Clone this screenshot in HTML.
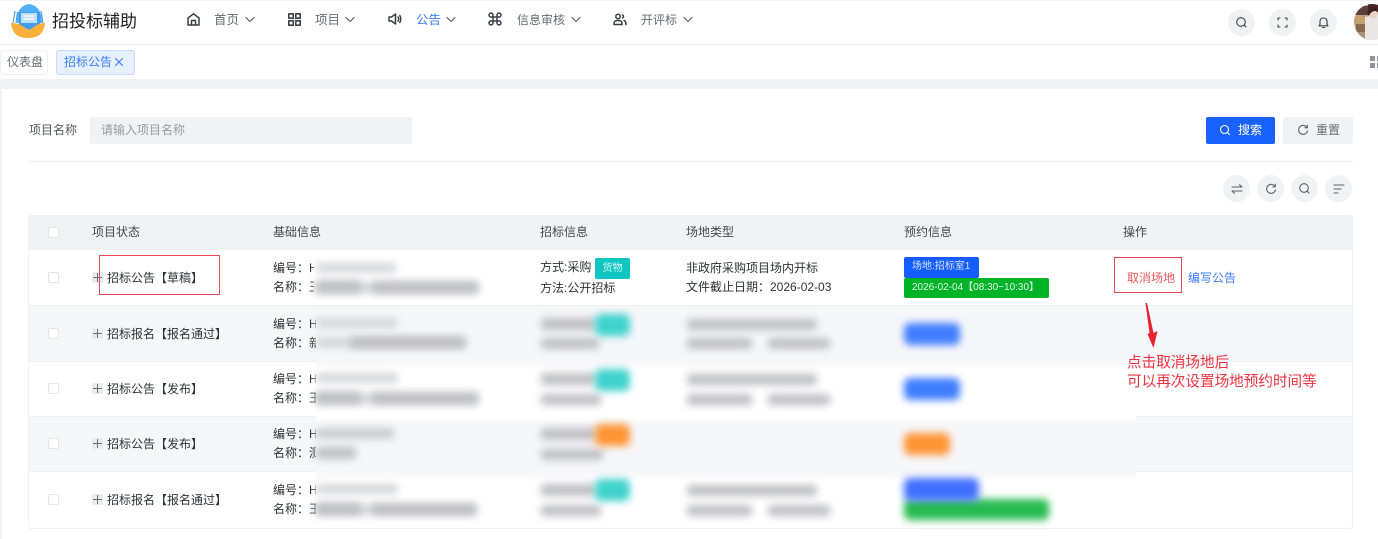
<!DOCTYPE html>
<html lang="zh"><head><meta charset="utf-8"><style>
*{box-sizing:border-box}
html,body{margin:0;padding:0}
body{width:1378px;height:539px;overflow:hidden;position:relative;background:#f1f2f4;font-family:"Liberation Sans","Noto Sans CJK SC",sans-serif;font-size:12px;color:#2f3236}
.a{position:absolute;white-space:nowrap}
.t{position:absolute;white-space:nowrap;line-height:18px}
.nav{color:#666c73;font-size:12px}
.ic{position:absolute;fill:none;stroke:#3a3f45;stroke-width:1.5;stroke-linecap:round;stroke-linejoin:round}
.circ{position:absolute;width:27px;height:27px;border-radius:50%;background:#f1f2f4}
.cb{position:absolute;left:48px;width:11px;height:11px;border:1px solid #e3e5e9;border-radius:2px;background:#fff}
.plus{position:absolute;left:92px;width:11px;height:11px;background:#e9ebef;border-radius:2px}
.plus:before,.plus:after{content:"";position:absolute;background:#6b7076}
.plus:before{left:1px;right:1px;top:5px;height:1px}
.plus:after{top:1px;bottom:1px;left:5px;width:1px}
.b{position:absolute;filter:blur(4px);border-radius:3px}
.g{background:#bfc0c4}
.l{background:#d6d7da}
</style></head><body>
<!-- top bar -->
<div class="a" style="left:0;top:1px;width:1378px;height:44px;background:#fff;border-bottom:1px solid #eff0f2"></div>
<svg class="a" style="left:9px;top:3px" width="38" height="36" viewBox="0 0 38 36">
<path d="M8 20 Q7 3 20 1 Q33 3 33 20 Z" fill="#4fb0f5"/>
<path d="M4 20 L6 8 M7 20 L8.500 9 M34 20 L32 8 M31 20 L30 9" stroke="#3f9fe8" stroke-width="1.100" fill="none"/>
<path d="M10 9 L31 9 L31 22 L20 27 L10 22 Z" fill="#3f9cf2"/>
<rect x="12" y="10" width="16" height="10" fill="#bfe0f8"/>
<path d="M15 13h10M15 16h10" stroke="#fff" stroke-width="1.200"/>
<path d="M2 20 Q8 20 12 22 L20 27 L28 22 Q31 20 36 20 Q35 35 19 35 Q3 35 2 20Z" fill="#fbb03b"/>
</svg>
<div class="t" style="left:52px;top:10px;font-size:17px;line-height:24px;color:#222">招投标辅助</div>

<svg class="ic" style="left:186px;top:12px" width="15" height="15" viewBox="0 0 15 15"><path d="M2 13V6L7.500 1.800 13 6V13ZM5.500 13V8.500H9.500V13"/></svg>
<div class="t nav" style="left:214px;top:11px;font-size:12.500px">首页</div>
<svg class="ic" style="left:245px;top:16px;stroke:#5c6168;stroke-width:1.200" width="10" height="7" viewBox="0 0 10 7"><path d="M1 1.500L5 5.500 9 1.500"/></svg>
<svg class="ic" style="left:288px;top:13px;stroke-width:1.600" width="13" height="13" viewBox="0 0 13 13"><path d="M.8.800h4.400v4.400H.8zM7.800.800h4.400v4.400H7.800zM.8 7.800h4.400v4.400H.8zM7.800 7.800h4.400v4.400H7.800z"/></svg>
<div class="t nav" style="left:315px;top:11px;font-size:12.500px">项目</div>
<svg class="ic" style="left:345px;top:16px;stroke:#5c6168;stroke-width:1.200" width="10" height="7" viewBox="0 0 10 7"><path d="M1 1.500L5 5.500 9 1.500"/></svg>
<svg class="ic" style="left:388px;top:12px" width="14" height="14" viewBox="0 0 14 14"><path d="M1 5V9H3.500L7.500 12V2L3.500 5ZM10 5Q11.500 7 10 9M11.800 3.500Q13.800 7 11.800 10.500"/></svg>
<div class="t" style="left:416px;top:11px;color:#3b7cff;font-size:12.500px">公告</div>
<svg class="ic" style="left:446px;top:16px;stroke:#5c6168;stroke-width:1.200" width="10" height="7" viewBox="0 0 10 7"><path d="M1 1.500L5 5.500 9 1.500"/></svg>
<svg class="ic" style="left:488px;top:12px" width="14" height="14" viewBox="0 0 14 14"><path d="M5 5H9V9H5ZM5 5H3.200A2 2 0 1 1 5 3.200ZM9 5V3.200A2 2 0 1 1 10.800 5ZM9 9H10.800A2 2 0 1 1 9 10.800ZM5 9V10.800A2 2 0 1 1 3.200 9Z"/></svg>
<div class="t nav" style="left:517px;top:11px">信息审核</div>
<svg class="ic" style="left:571px;top:16px;stroke:#5c6168;stroke-width:1.200" width="10" height="7" viewBox="0 0 10 7"><path d="M1 1.500L5 5.500 9 1.500"/></svg>
<svg class="ic" style="left:613px;top:13px" width="14" height="13" viewBox="0 0 14 13"><circle cx="5" cy="3.500" r="2.200"/><path d="M1 11.500V10Q1 7.500 5 7.500T9 10V11.500ZM9.500 2Q11.500 3.500 9.500 5M11 7.500Q13 8 13 11.500"/></svg>
<div class="t nav" style="left:641px;top:11px">开评标</div>
<svg class="ic" style="left:683px;top:16px;stroke:#5c6168;stroke-width:1.200" width="10" height="7" viewBox="0 0 10 7"><path d="M1 1.500L5 5.500 9 1.500"/></svg>

<div class="circ" style="left:1228px;top:9px"></div>
<svg class="ic" style="left:1235px;top:16px;stroke-width:1.100" width="13" height="13" viewBox="0 0 13 13"><circle cx="6" cy="6" r="4.300"/><path d="M9.300 9.300L11 11"/></svg>
<div class="circ" style="left:1269px;top:9px"></div>
<svg class="ic" style="left:1277px;top:17px;stroke-width:1.100" width="11" height="11" viewBox="0 0 11 11"><path d="M1 3V1H3M8 1H10V3M10 8V10H8M3 10H1V8"/></svg>
<div class="circ" style="left:1310px;top:9px"></div>
<svg class="ic" style="left:1317px;top:16px;stroke-width:1.100" width="13" height="13" viewBox="0 0 13 13"><path d="M2 9.800H11L10 8.500V5.500Q10 2 6.500 2T3 5.500V8.500ZM5.500 11.500H7.500"/></svg>
<svg class="a" style="left:1354px;top:4px" width="24" height="36" viewBox="0 0 24 36"><defs><clipPath id="av"><circle cx="18" cy="18" r="18"/></clipPath></defs><g clip-path="url(#av)"><rect width="36" height="36" fill="#b8a48a"/><rect x="0" y="2" width="16" height="9" fill="#5f3f36"/><rect x="14" y="0" width="10" height="8" fill="#4a2226"/><rect x="0" y="12" width="10" height="7" fill="#c9a06a"/><rect x="2" y="20" width="9" height="8" fill="#8a6a4a"/><rect x="4" y="28" width="9" height="8" fill="#a88f78"/><path d="M11 13 L24 10 L24 36 L11 36Z" fill="#e9e6e3"/><circle cx="19" cy="10" r="4.500" fill="#eed4c6"/><path d="M13 8 Q16 3 24 4 V7 Q17 6 15 12Z" fill="#3a2020"/></g></svg>

<!-- tabs -->
<div class="a" style="left:0;top:45px;width:1378px;height:34px;background:#fff"></div>
<div class="a" style="left:0;top:50px;width:48px;height:25px;border:1px solid #eff0f2;border-radius:3px;background:#fff;color:#666c73;line-height:23px;padding-left:6px">仪表盘</div>
<div class="a" style="left:56px;top:50px;width:79px;height:25px;border:1px solid #c6dcfc;border-radius:3px;background:#e6f0fe;color:#3b7cff;line-height:23px;padding-left:7px">招标公告</div>
<svg class="ic" style="left:114px;top:57px;stroke:#3b7cff;stroke-width:1.100" width="10" height="10" viewBox="0 0 10 10"><path d="M1.500 1.500L8.500 8.500M8.500 1.500L1.500 8.500"/></svg>
<svg class="a" style="left:1370px;top:56px" width="8" height="13"><path d="M0 0h5v5H0zM7 0h5v5H7zM0 7h5v5H0zM7 7h5v5H7z" fill="#8d949c"/></svg>

<!-- content -->
<div class="a" style="left:2px;top:89px;width:1376px;height:450px;background:#fff"></div>
<div class="t" style="left:29px;top:121px;color:#555a60">项目名称</div>
<div class="a" style="left:90px;top:117px;width:322px;height:27px;background:#f1f2f4;border-radius:2px;color:#969ba1;line-height:26px;padding-left:11px">请输入项目名称</div>
<div class="a" style="left:1206px;top:117px;width:69px;height:27px;background:#1a62ff;border-radius:2px;color:#fff;line-height:26px;padding-left:32px">搜索</div>
<svg class="ic" style="left:1219px;top:124px;stroke:#fff;stroke-width:1.100" width="12" height="12" viewBox="0 0 12 12"><circle cx="5.500" cy="5.500" r="4"/><path d="M8.500 8.500L10.500 10.500"/></svg>
<div class="a" style="left:1283px;top:117px;width:70px;height:27px;background:#f1f2f4;border-radius:2px;color:#666c73;line-height:26px;padding-left:33px">重置</div>
<svg class="ic" style="left:1297px;top:124px;stroke:#5c6168;stroke-width:1.100" width="12" height="12" viewBox="0 0 12 12"><path d="M10 3.500A4.500 4.500 0 1 0 10.500 7M10.300 1.200V3.800H7.800"/></svg>
<div class="a" style="left:28px;top:161px;width:1325px;height:1px;background:#eeeff1"></div>

<div class="circ" style="left:1223px;top:175px"></div>
<svg class="ic" style="left:1231px;top:183px;stroke:#5c6168;stroke-width:1.100" width="12" height="12" viewBox="0 0 12 12"><path d="M1 4H11L8.500 1.800M11 8H1L3.500 10.200"/></svg>
<div class="circ" style="left:1257px;top:175px"></div>
<svg class="ic" style="left:1265px;top:183px;stroke:#5c6168;stroke-width:1.100" width="12" height="12" viewBox="0 0 12 12"><path d="M10 3.500A4.500 4.500 0 1 0 10.500 7M10.300 1.200V3.800H7.800"/></svg>
<div class="circ" style="left:1291px;top:175px"></div>
<svg class="ic" style="left:1298px;top:182px;stroke:#5c6168;stroke-width:1.100" width="13" height="13" viewBox="0 0 13 13"><circle cx="6" cy="6" r="4.300"/><path d="M9.300 9.300L11 11"/></svg>
<div class="circ" style="left:1325px;top:175px"></div>
<svg class="ic" style="left:1333px;top:183px;stroke:#5c6168;stroke-width:1.100" width="12" height="12" viewBox="0 0 12 12"><path d="M1 2H11M1 6H8M1 10H5"/></svg>

<!-- table -->
<div class="a" style="left:29px;top:215px;width:1324px;height:35px;background:#f1f2f4;border-radius:3px 3px 0 0"></div>
<div class="a" style="left:29px;top:306px;width:1324px;height:55px;background:#f6f7f9"></div>
<div class="a" style="left:29px;top:417px;width:1324px;height:55px;background:#f6f7f9"></div>
<div class="a" style="left:28px;top:215px;width:1325px;height:314px;border:1px solid #f0f1f3;border-radius:3px"></div>
<div class="a" style="left:29px;top:305px;width:1324px;height:1px;background:#eff0f3"></div>
<div class="a" style="left:29px;top:361px;width:1324px;height:1px;background:#f0f1f3"></div>
<div class="a" style="left:29px;top:416px;width:1324px;height:1px;background:#f0f1f3"></div>
<div class="a" style="left:29px;top:471px;width:1324px;height:1px;background:#f0f1f3"></div>

<div class="cb" style="top:227px"></div>
<div class="t" style="left:92px;top:223px;color:#444950">项目状态</div>
<div class="t" style="left:273px;top:223px;color:#444950">基础信息</div>
<div class="t" style="left:540px;top:223px;color:#444950">招标信息</div>
<div class="t" style="left:686px;top:223px;color:#444950">场地类型</div>
<div class="t" style="left:904px;top:223px;color:#444950">预约信息</div>
<div class="t" style="left:1123px;top:223px;color:#444950">操作</div>

<div class="cb" style="top:272px"></div><div class="plus" style="top:272px"></div>
<div class="t" style="left:107px;top:269px">招标公告【草稿】</div>
<div class="t" style="left:273px;top:259px">编号：H</div><div class="t" style="left:273px;top:278px">名称：王</div>

<div class="cb" style="top:328px"></div><div class="plus" style="top:328px"></div>
<div class="t" style="left:107px;top:325px">招标报名【报名通过】</div>
<div class="t" style="left:273px;top:315px">编号：H</div><div class="t" style="left:273px;top:334px">名称：新</div>

<div class="cb" style="top:383px"></div><div class="plus" style="top:383px"></div>
<div class="t" style="left:107px;top:380px">招标公告【发布】</div>
<div class="t" style="left:273px;top:370px">编号：H</div><div class="t" style="left:273px;top:389px">名称：王</div>

<div class="cb" style="top:438px"></div><div class="plus" style="top:438px"></div>
<div class="t" style="left:107px;top:435px">招标公告【发布】</div>
<div class="t" style="left:273px;top:425px">编号：H</div><div class="t" style="left:273px;top:444px">名称：测</div>

<div class="cb" style="top:494px"></div><div class="plus" style="top:494px"></div>
<div class="t" style="left:107px;top:491px">招标报名【报名通过】</div>
<div class="t" style="left:273px;top:481px">编号：H</div><div class="t" style="left:273px;top:500px">名称：王</div>

<!-- blur masks -->
<div class="a" style="left:314px;top:252px;width:194px;height:50px;background:#fff"></div>
<div class="a" style="left:316px;top:306px;width:820px;height:55px;background:#f6f7f9"></div>
<div class="a" style="left:316px;top:361px;width:820px;height:56px;background:linear-gradient(#f6f7f9,#fff 9px)"></div>
<div class="a" style="left:316px;top:417px;width:820px;height:55px;background:linear-gradient(#fff,#f6f7f9 8px)"></div>
<div class="a" style="left:316px;top:472px;width:820px;height:55px;background:linear-gradient(#f6f7f9,#fff 9px)"></div>

<!-- blurred text -->
<div class="b l" style="left:316px;top:263px;width:80px;height:10px"></div>
<div class="b l" style="left:316px;top:282px;width:162px;height:11px"></div>
<div class="b g" style="left:316px;top:281px;width:45px;height:12px"></div>
<div class="b g" style="left:372px;top:282px;width:106px;height:11px"></div>
<div class="b l" style="left:316px;top:318px;width:82px;height:10px"></div>
<div class="b l" style="left:316px;top:337px;width:150px;height:11px"></div>
<div class="b g" style="left:350px;top:337px;width:115px;height:11px"></div>
<div class="b l" style="left:316px;top:373px;width:82px;height:10px"></div>
<div class="b l" style="left:316px;top:393px;width:162px;height:11px"></div>
<div class="b g" style="left:316px;top:392px;width:45px;height:12px"></div>
<div class="b g" style="left:372px;top:393px;width:106px;height:11px"></div>
<div class="b g" style="left:316px;top:428px;width:78px;height:11px;background:#cbccd0"></div>
<div class="b g" style="left:316px;top:447px;width:40px;height:12px"></div>
<div class="b l" style="left:316px;top:484px;width:82px;height:10px"></div>
<div class="b l" style="left:316px;top:504px;width:160px;height:11px"></div>
<div class="b g" style="left:316px;top:503px;width:45px;height:12px"></div>
<div class="b g" style="left:372px;top:504px;width:104px;height:11px"></div>

<div class="b g" style="left:541px;top:318px;width:55px;height:12px"></div>
<div class="b g" style="left:541px;top:338px;width:58px;height:11px"></div>
<div class="b" style="left:595px;top:314px;width:35px;height:22px;background:#3fd2cc;border-radius:6px"></div>
<div class="b g" style="left:541px;top:373px;width:55px;height:12px"></div>
<div class="b g" style="left:541px;top:394px;width:60px;height:11px"></div>
<div class="b" style="left:595px;top:369px;width:35px;height:22px;background:#3fd2cc;border-radius:6px"></div>
<div class="b g" style="left:541px;top:428px;width:55px;height:12px"></div>
<div class="b g" style="left:541px;top:449px;width:62px;height:11px"></div>
<div class="b" style="left:595px;top:424px;width:35px;height:22px;background:#ff9433;border-radius:6px"></div>
<div class="b g" style="left:541px;top:484px;width:55px;height:12px"></div>
<div class="b g" style="left:541px;top:505px;width:60px;height:11px"></div>
<div class="b" style="left:595px;top:479px;width:35px;height:22px;background:#3fd2cc;border-radius:6px"></div>

<div class="b g" style="left:687px;top:319px;width:130px;height:11px"></div>
<div class="b g" style="left:687px;top:338px;width:65px;height:11px"></div><div class="b g" style="left:768px;top:338px;width:62px;height:11px"></div>
<div class="b g" style="left:687px;top:374px;width:130px;height:11px"></div>
<div class="b g" style="left:687px;top:394px;width:65px;height:11px"></div><div class="b g" style="left:768px;top:394px;width:62px;height:11px"></div>
<div class="b g" style="left:687px;top:485px;width:130px;height:11px"></div>
<div class="b g" style="left:687px;top:505px;width:65px;height:11px"></div><div class="b g" style="left:768px;top:505px;width:62px;height:11px"></div>

<div class="b" style="left:904px;top:323px;width:56px;height:22px;background:#3f7dff;border-radius:6px"></div>
<div class="b" style="left:904px;top:378px;width:56px;height:22px;background:#3f7dff;border-radius:6px"></div>
<div class="b" style="left:904px;top:433px;width:46px;height:22px;background:#ff9433;border-radius:6px"></div>
<div class="b" style="left:904px;top:499px;width:145px;height:21px;background:#26bb50;border-radius:6px"></div>
<div class="b" style="left:904px;top:478px;width:75px;height:23px;background:#3f6fff;border-radius:6px"></div>

<!-- row1 clear -->
<div class="t" style="left:540px;top:258px">方式:采购</div>
<div class="a" style="left:595px;top:258px;width:35px;height:21px;background:#0fc6c2;border-radius:2px;color:#d7f7f5;font-size:10px;line-height:22px;text-align:center">货物</div>
<div class="t" style="left:540px;top:279px">方法:公开招标</div>
<div class="t" style="left:686px;top:259px">非政府采购项目场内开标</div>
<div class="t" style="left:686px;top:278px">文件截止日期：2026-02-03</div>
<div class="a" style="left:904px;top:257px;width:75px;height:21px;background:#165dff;border-radius:2px;color:#d5e3ff;font-size:10px;line-height:20px;padding-left:8px">场地:招标室1</div>
<div class="a" style="left:904px;top:278px;width:145px;height:20px;background:#00b42a;border-radius:2px;color:#e8fbe9;font-size:10px;line-height:20px;padding-left:8px">2026-02-04【08:30~10:30】</div>

<div class="t" style="left:1127px;top:269px;color:#ef5a5f">取消场地</div>
<div class="t" style="left:1188px;top:269px;color:#3b7cff">编写公告</div>

<!-- annotations -->
<div class="a" style="left:99px;top:255px;width:121px;height:40px;border:1px solid #ea4a55"></div>
<div class="a" style="left:1114px;top:257px;width:68px;height:36px;border:1px solid #ea4a55"></div>
<svg class="a" style="left:1140px;top:300px" width="24" height="50" viewBox="0 0 24 50"><path d="M5.500 3L7 3 13.500 33 17.500 31 13.500 48 7.500 34 9.500 33Z" fill="#e8212f"/></svg>
<div class="a" style="left:1127px;top:354px;font-size:14.600px;line-height:19px;color:#ee3140">点击取消场地后<br>可以再次设置场地预约时间等</div>
</body></html>
